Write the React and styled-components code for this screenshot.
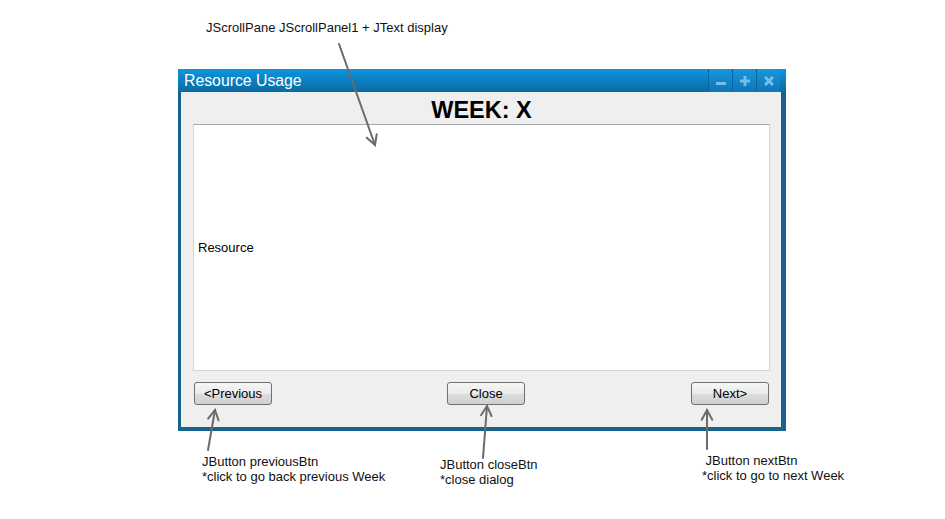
import React from "react";
import styled, { createGlobalStyle } from "styled-components";

const GlobalStyle = createGlobalStyle`
  html, body {
    margin: 0;
    padding: 0;
    background: #ffffff;
  }
  body {
    font-family: "Liberation Sans", Arial, sans-serif;
  }
`;

const Canvas = styled.div`
  position: relative;
  width: 945px;
  height: 519px;
  overflow: hidden;
  background: #ffffff;
`;

const Window = styled.div`
  position: absolute;
  left: 178px;
  top: 69px;
  width: 608px;
  height: 362px;
  display: flex;
  flex-direction: column;
  background: #16638b;
`;

const TitleBar = styled.div`
  height: 23px;
  display: flex;
  align-items: center;
  padding-left: 6px;
  padding-right: 6px;
  background: linear-gradient(#0c95df, #0a6aa3);
  color: #ffffff;
  font-size: 15.8px;
`;

const Title = styled.span`
  flex: 1;
  line-height: 25px;
`;

const Controls = styled.div`
  display: flex;
  align-self: stretch;
  gap: 1px;
  padding-left: 1px;
  background: #0b6199;
`;

const ControlBtn = styled.div`
  width: 23px;
  display: flex;
  align-items: center;
  justify-content: center;
  background: linear-gradient(#1796dc, #0d77b6);
`;

const Body = styled.div`
  flex: 1;
  margin: 0 5px 4px 3px;
  background: #efefef;
  display: flex;
  flex-direction: column;
  padding: 0 11px 22px 12px;
`;

const Heading = styled.div`
  height: 32px;
  display: flex;
  align-items: center;
  justify-content: center;
  font-weight: bold;
  font-size: 23.5px;
  padding-top: 5px;
  box-sizing: border-box;
  color: #000;
`;

const Panel = styled.div`
  height: 245px;
  background: #ffffff;
  border: 1px solid #d6d6d6;
  border-top-color: #a8a8a8;
  display: flex;
  align-items: center;
  padding-left: 4px;
  font-size: 13px;
  color: #000;
`;

const ButtonRow = styled.div`
  margin-top: 11px;
  display: grid;
  grid-template-columns: 78px 1fr 78px;
  align-items: center;
  padding-left: 1px;
  padding-right: 1px;
`;

const Button = styled.div`
  width: 78px;
  height: 23px;
  box-sizing: border-box;
  border: 1px solid #707070;
  border-radius: 3px;
  background: linear-gradient(#f6f6f6 0%, #ebebeb 50%, #dddddd 51%, #d0d0d0 100%);
  display: flex;
  align-items: center;
  justify-content: center;
  font-size: 13px;
  color: #000;
  justify-self: ${(p) => p.$align || "start"};
  margin-left: ${(p) => p.$shift || 0}px;
`;

const Note = styled.div`
  position: absolute;
  left: ${(p) => p.$x}px;
  top: ${(p) => p.$y}px;
  font-size: 13px;
  line-height: 15px;
  color: #111;
  white-space: nowrap;
`;

const Arrows = styled.svg`
  position: absolute;
  left: 0;
  top: 0;
  pointer-events: none;
`;

const Arrow = ({ x1, y1, x2, y2 }) => {
  const a = Math.atan2(y2 - y1, x2 - x1);
  const len = 11;
  const spread = 0.5;
  const h1 = [x2 - len * Math.cos(a - spread), y2 - len * Math.sin(a - spread)];
  const h2 = [x2 - len * Math.cos(a + spread), y2 - len * Math.sin(a + spread)];
  return (
    <g stroke="#6b6b6b" strokeWidth="2" fill="none" strokeLinecap="round">
      <line x1={x1} y1={y1} x2={x2} y2={y2} />
      <polyline points={`${h1[0]},${h1[1]} ${x2},${y2} ${h2[0]},${h2[1]}`} />
    </g>
  );
};

const iconColor = "#79bde6";

export default function App() {
  return (
    <>
      <GlobalStyle />
      <Canvas>
        <Note $x={206} $y={20}>JScrollPane JScrollPanel1 + JText display</Note>

        <Window>
          <TitleBar>
            <Title>Resource Usage</Title>
            <Controls>
              <ControlBtn>
                <svg width="10" height="10" viewBox="0 0 10 10">
                  <rect x="0" y="6" width="10" height="3" fill={iconColor} />
                </svg>
              </ControlBtn>
              <ControlBtn>
                <svg width="10" height="10" viewBox="0 0 10 10">
                  <rect x="0" y="3.5" width="10" height="3" fill={iconColor} />
                  <rect x="3.5" y="0" width="3" height="10" fill={iconColor} />
                </svg>
              </ControlBtn>
              <ControlBtn>
                <svg width="10" height="10" viewBox="0 0 10 10">
                  <path d="M1 1 L9 9 M9 1 L1 9" stroke={iconColor} strokeWidth="3" />
                </svg>
              </ControlBtn>
            </Controls>
          </TitleBar>
          <Body>
            <Heading>WEEK: X</Heading>
            <Panel>Resource</Panel>
            <ButtonRow>
              <Button>&lt;Previous</Button>
              <Button $align="center" $shift={9}>Close</Button>
              <Button $align="end">Next&gt;</Button>
            </ButtonRow>
          </Body>
        </Window>

        <Note $x={202} $y={454}>
          JButton previousBtn
          <br />
          *click to go back previous Week
        </Note>
        <Note $x={440} $y={457}>
          JButton closeBtn
          <br />
          *close dialog
        </Note>
        <Note $x={702} $y={453}>
          &nbsp;JButton nextBtn
          <br />
          *click to go to next Week
        </Note>

        <Arrows width="945" height="519">
          <Arrow x1={339} y1={44} x2={375} y2={145} />
          <Arrow x1={208} y1={450} x2={215} y2={410} />
          <Arrow x1={483} y1={458} x2={487} y2={406} />
          <Arrow x1={707} y1={449} x2={707} y2={410} />
        </Arrows>
      </Canvas>
    </>
  );
}
